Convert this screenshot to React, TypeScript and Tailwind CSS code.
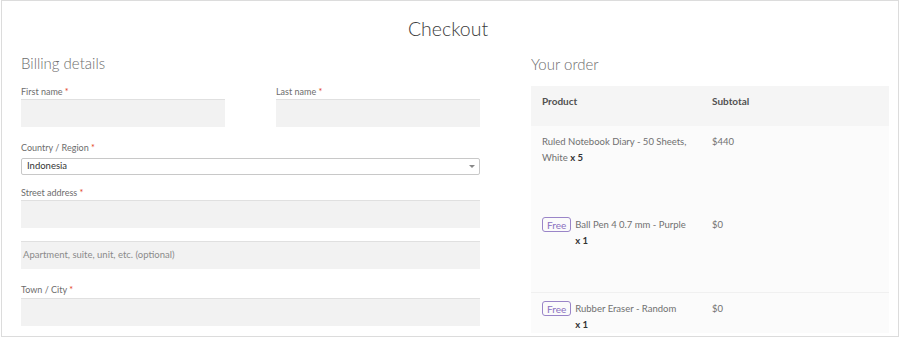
import React from 'react'

const font = { fontFamily: 'Lato, "Open Sans", sans-serif' }

function Label({ text, required = true }: { text: string; required?: boolean }) {
  return (
    <div className="text-[9px] leading-[12px] text-[#6d6d6d]">
      {text}
      {required && <span className="text-[#e2401c]"> *</span>}
    </div>
  )
}

function Field({ placeholder }: { placeholder?: string }) {
  return (
    <div className="h-[28px] bg-[#f2f2f2] border-t border-[#e0e0e0] flex items-center px-[2px] text-[9.5px] text-[#8a8a8a]">
      {placeholder}
    </div>
  )
}

function Free() {
  return (
    <span className="inline-flex items-center h-[15px] px-[4px] mr-[4px] border border-[#9a85c8] rounded-[3px] text-[10px] leading-none text-[#8a70c0]">
      Free
    </span>
  )
}

export default function App() {
  return (
    <div className="w-[900px] h-[339px] bg-white overflow-hidden" style={font}>
      <div className="ml-[1px] w-[898px] h-[337px] border border-[#dcdcdc] flex flex-col">
        <h1 className="text-center text-[19.5px] font-light text-[#3c3c3c] leading-[20px] pt-[18px] pr-[4px]">Checkout</h1>
        <div className="flex pl-[19px] pt-[14px]">
          {/* billing */}
          <div className="w-[459px]">
            <h2 className="text-[15px] font-light text-[#6d6d6d] leading-[20px]">Billing details</h2>
            <div className="flex gap-[51px] mt-[13px]">
              <div className="w-[204px] flex flex-col gap-[1px]">
                <Label text="First name" />
                <Field />
              </div>
              <div className="w-[204px] flex flex-col gap-[1px]">
                <Label text="Last name" />
                <Field />
              </div>
            </div>
            <div className="mt-[15px] flex flex-col gap-[4px]">
              <Label text="Country / Region" />
              <div className="h-[17px] border border-[#c8c8c8] rounded-[2px] flex items-center justify-between pl-[5px] pr-[4px] text-[9.5px] text-[#333]">
                <span>Indonesia</span>
                <span className="w-0 h-0 border-l-[3px] border-r-[3px] border-t-[3px] border-l-transparent border-r-transparent border-t-[#888]" />
              </div>
            </div>
            <div className="mt-[12px] flex flex-col gap-[1px]">
              <Label text="Street address" />
              <Field />
            </div>
            <div className="mt-[13px]">
              <Field placeholder="Apartment, suite, unit, etc. (optional)" />
            </div>
            <div className="mt-[15px] flex flex-col gap-[2px]">
              <Label text="Town / City" />
              <Field />
            </div>
          </div>
          {/* order */}
          <div className="ml-[51px] w-[358px] mt-[1px]">
            <h2 className="text-[15px] font-light text-[#6d6d6d] leading-[20px]">Your order</h2>
            <div className="mt-[12px] text-[9.5px] text-[#707070]">
              <div className="flex h-[40px] bg-[#f5f5f5] pt-[8px] text-[10px] font-bold text-[#515151] pl-[11px]">
                <div className="w-[170px]">Product</div>
                <div>Subtotal</div>
              </div>
              <div className="flex bg-[#fbfbfb] pl-[11px] pt-[8px] h-[83px] leading-[16px]">
                <div className="w-[170px] pr-[8px]">
                  Ruled Notebook Diary - 50 Sheets, White <b className="text-[#333]">x 5</b>
                </div>
                <div>$440</div>
              </div>
              <div className="flex bg-[#fbfbfb] pl-[11px] pt-[8px] h-[84px] leading-[16px] border-b border-[#f0f0f0]">
                <div className="w-[170px] flex">
                  <div><Free /></div>
                  <div>
                    Ball Pen 4 0.7 mm - Purple
                    <div><b className="text-[#333]">x 1</b></div>
                  </div>
                </div>
                <div>$0</div>
              </div>
              <div className="flex bg-[#fbfbfb] pl-[11px] pt-[8px] h-[40px] leading-[16px]">
                <div className="w-[170px] flex">
                  <div><Free /></div>
                  <div>
                    Rubber Eraser - Random
                    <div><b className="text-[#333]">x 1</b></div>
                  </div>
                </div>
                <div>$0</div>
              </div>
            </div>
          </div>
        </div>
      </div>
    </div>
  )
}
